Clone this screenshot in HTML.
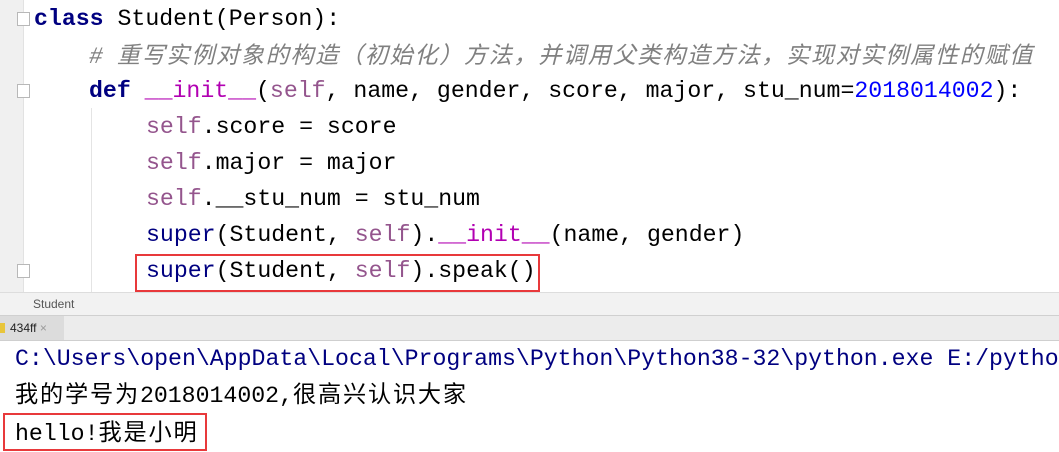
<!DOCTYPE html>
<html><head><meta charset="utf-8"><style>
*{margin:0;padding:0;box-sizing:border-box}
body{width:1059px;height:452px;overflow:hidden;background:#fff;position:relative;font-family:"Liberation Mono","Noto Sans CJK SC",monospace;font-size:23.2px;color:#000}
.gut{position:absolute;left:0;top:0;width:24px;height:292px;background:#f0f0f0;border-right:1px solid #e2e2e2}
.l{position:absolute;white-space:pre;line-height:36px;height:36px}
.k{color:#000080;font-weight:bold}
.m{color:#b200b2}
.s{color:#94558d}
.n{color:#0000ff}
.c{color:#808080;font-style:italic}
.cj{font-family:"Noto Sans CJK SC",sans-serif;letter-spacing:1.8px}
.fold{position:absolute;left:17px;width:13px;height:14px;border:1px solid #b8b8b8;background:#fff}
.guide{position:absolute;left:91px;top:108px;width:1px;height:184px;background:#e4e4e4}
.bc{position:absolute;left:0;top:292px;width:1059px;height:24px;background:#f2f2f2;border-top:1px solid #ddd;border-bottom:1px solid #d0d0d0;font-family:"Liberation Sans",sans-serif;font-size:12px;color:#555;padding:4px 0 0 33px}
.tb{position:absolute;left:0;top:316px;width:1059px;height:25px;background:#ececec;border-bottom:1px solid #cfcfcf}
.tab{position:absolute;left:0;top:0;width:64px;height:24px;background:#dcdcdc;font-family:"Liberation Sans",sans-serif;font-size:12px;padding:5px 0 0 10px;color:#222}
.box{position:absolute;border:2px solid #e8393b}
</style></head><body>
<div class="gut"></div>
<div class="fold" style="top:12px"></div>
<div class="fold" style="top:84px"></div>
<div class="fold" style="top:264px"></div>
<div class="guide"></div>
<div class="l" style="left:34px;top:1px"><span class="k">class</span> Student(Person):</div>
<div class="l" style="left:89px;top:35px"><span class="c"># <span class="cj" style="letter-spacing:1.6px">重写实例对象的构造（初始化）方法，并调用父类构造方法，实现对实例属性的赋值</span></span></div>
<div class="l" style="left:89px;top:73px"><span class="k">def</span> <span class="m">__init__</span>(<span class="s">self</span>, name, gender, score, major, stu_num=<span class="n">2018014002</span>):</div>
<div class="l" style="left:146px;top:109px"><span class="s">self</span>.score = score</div>
<div class="l" style="left:146px;top:145px"><span class="s">self</span>.major = major</div>
<div class="l" style="left:146px;top:181px"><span class="s">self</span>.__stu_num = stu_num</div>
<div class="l" style="left:146px;top:217px"><span class="k" style="font-weight:normal">super</span>(Student, <span class="s">self</span>).<span class="m">__init__</span>(name, gender)</div>
<div class="l" style="left:146px;top:253px"><span class="k" style="font-weight:normal">super</span>(Student, <span class="s">self</span>).speak()</div>
<div class="box" style="left:135px;top:254px;width:405px;height:38px"></div>
<div class="bc">Student</div>
<div class="tb"><div class="tab"><span style="position:absolute;left:0;top:7px;width:5px;height:10px;background:#e8c53a"></span>434ff <span style="color:#999">×</span></div></div>
<div class="l" style="left:15px;top:341px;color:#000080">C:\Users\open\AppData\Local\Programs\Python\Python38-32\python.exe E:/python</div>
<div class="l" style="left:15px;top:374px"><span class="cj">我的学号为</span>2018014002,<span class="cj">很高兴认识大家</span></div>
<div class="l" style="left:15px;top:412px">hello!<span class="cj">我是小明</span></div>
<div class="box" style="left:3px;top:413px;width:204px;height:38px"></div>
</body></html>
